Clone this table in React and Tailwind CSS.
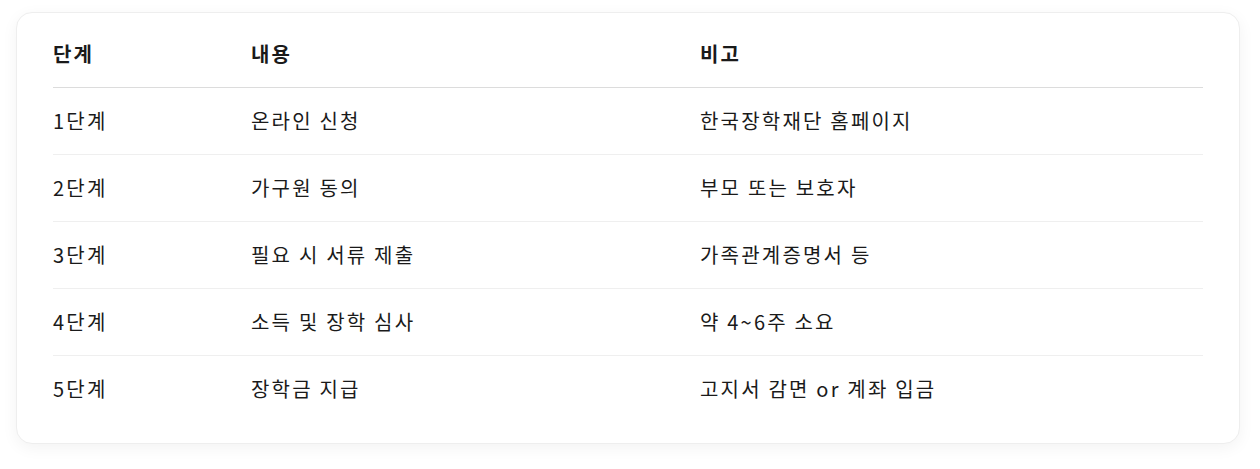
const rows = [
  ['1단계', '온라인 신청', '한국장학재단 홈페이지'],
  ['2단계', '가구원 동의', '부모 또는 보호자'],
  ['3단계', '필요 시 서류 제출', '가족관계증명서 등'],
  ['4단계', '소득 및 장학 심사', '약 4~6주 소요'],
  ['5단계', '장학금 지급', '고지서 감면 or 계좌 입금'],
];

export default function App() {
  return (
    <div
      className="min-h-[469px] w-[1260px] bg-white pl-4 pt-3 text-[#1a1a1a]"
      style={{ fontFamily: '"Noto Sans CJK KR", "Noto Sans", sans-serif' }}
    >
      <div className="w-[1224px] rounded-2xl border border-[#eeeeee] bg-white px-9 pb-[21px] pt-[9px] shadow-[0_4px_16px_rgba(0,0,0,0.05)]">
        <table className="w-full table-fixed border-collapse text-left text-[20px] tracking-[2.2px]">
          <colgroup>
            <col className="w-[198px]" />
            <col className="w-[449px]" />
            <col />
          </colgroup>
          <thead>
            <tr className="h-[65px] border-b border-[#dcdcdc]">
              <th className="font-bold">단계</th>
              <th className="font-bold">내용</th>
              <th className="font-bold">비고</th>
            </tr>
          </thead>
          <tbody>
            {rows.map((r, i) => (
              <tr
                key={r[0]}
                className={`h-[67px] ${i < rows.length - 1 ? 'border-b border-[#efefef]' : ''}`}
              >
                <td>{r[0]}</td>
                <td>{r[1]}</td>
                <td>{r[2]}</td>
              </tr>
            ))}
          </tbody>
        </table>
      </div>
    </div>
  );
}
